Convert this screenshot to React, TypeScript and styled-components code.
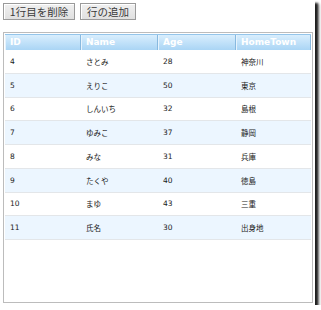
import React from "react";
import styled, { createGlobalStyle } from "styled-components";

const Global = createGlobalStyle`
  html, body { margin: 0; padding: 0; background: #ffffff; }
  body { font-family: "DejaVu Sans", "Noto Sans CJK JP", sans-serif; }
`;

const Frame = styled.div`
  width: 315px;
  height: 305px;
  box-sizing: border-box;
  background: #ffffff;
  padding: 3px 0 0 3px;
  box-shadow: 3px 3px 2px rgba(0, 0, 0, 0.8), 4px 4px 3px rgba(0, 0, 0, 0.4);
  display: flex;
  flex-direction: column;
`;

const Toolbar = styled.div`
  display: flex;
  gap: 5px;
  height: 17px;
`;

const Button = styled.button<{ $w: number }>`
  width: ${(p) => p.$w}px;
  height: 17px;
  box-sizing: border-box;
  margin: 0;
  padding: 0;
  border: 1px solid #9a9a9a;
  background: linear-gradient(#f0f0f0, #e0e0e0);
  color: #3a3a3a;
  font-family: "Noto Sans CJK JP", sans-serif;
  font-size: 10.5px;
  line-height: 15px;
  text-align: center;
  box-shadow: inset 1px 1px 0 #ffffff;
`;

const GridBox = styled.div`
  margin-top: 12px;
  width: 310px;
  height: 271px;
  box-sizing: border-box;
  border: 1px solid #bcbcbc;
  padding: 1px;
  display: flex;
  flex-direction: column;
`;

const cols = "76px 77px 78px 75px";

const HeaderRow = styled.div`
  display: grid;
  grid-template-columns: ${cols};
  height: 16px;
  box-sizing: border-box;
  background: linear-gradient(#d9eefd, #aad5f5);
  border-top: 1px solid #94c5ea;
`;

const HeaderCell = styled.div`
  padding-left: 5px;
  border-right: 1px solid #88b9df;
  box-shadow: inset 1px 0 0 #e6f3fd;
  color: #ffffff;
  font-family: "DejaVu Sans", sans-serif;
  font-weight: bold;
  font-size: 9px;
  line-height: 15px;
  white-space: nowrap;
  overflow: hidden;
`;

const Row = styled.div<{ $alt: boolean }>`
  display: grid;
  grid-template-columns: ${cols};
  height: 23.75px;
  box-sizing: border-box;
  align-items: center;
  background: ${(p) => (p.$alt ? "#ecf6ff" : "#ffffff")};
  border-bottom: 1px solid #e3e6e9;
`;

const Cell = styled.div`
  padding-left: 5px;
  color: #1a1a1a;
  font-family: "DejaVu Sans", "Noto Sans CJK JP", sans-serif;
  font-size: 7.5px;
  white-space: nowrap;
`;

const data: [number, string, number, string][] = [
  [4, "さとみ", 28, "神奈川"],
  [5, "えりこ", 50, "東京"],
  [6, "しんいち", 32, "島根"],
  [7, "ゆみこ", 37, "静岡"],
  [8, "みな", 31, "兵庫"],
  [9, "たくや", 40, "徳島"],
  [10, "まゆ", 43, "三重"],
  [11, "氏名", 30, "出身地"],
];

export default function App() {
  return (
    <>
      <Global />
      <Frame>
        <Toolbar>
          <Button $w={72}>1行目を削除</Button>
          <Button $w={56}>行の追加</Button>
        </Toolbar>
        <GridBox>
          <HeaderRow>
            <HeaderCell>ID</HeaderCell>
            <HeaderCell>Name</HeaderCell>
            <HeaderCell>Age</HeaderCell>
            <HeaderCell>HomeTown</HeaderCell>
          </HeaderRow>
          {data.map(([id, name, age, town], i) => (
            <Row key={id} $alt={i % 2 === 1}>
              <Cell>{id}</Cell>
              <Cell>{name}</Cell>
              <Cell>{age}</Cell>
              <Cell>{town}</Cell>
            </Row>
          ))}
        </GridBox>
      </Frame>
    </>
  );
}
